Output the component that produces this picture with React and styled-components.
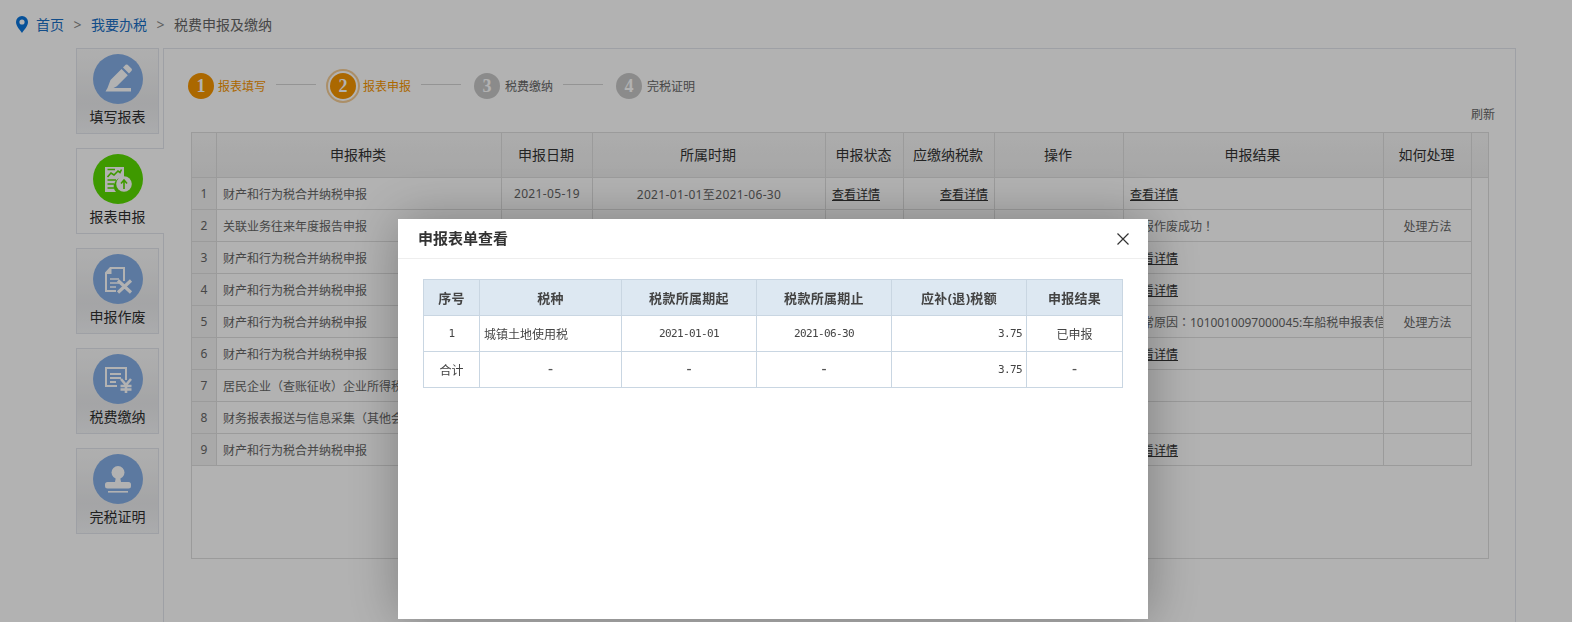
import React from "react";
import styled, { createGlobalStyle } from "styled-components";

const Global = createGlobalStyle`
  html, body { margin: 0; padding: 0; height: 100%; overflow: hidden; background: #fff; }
  body { font-family: "Noto Sans", "Noto Sans CJK SC", sans-serif; color: #333; }
  * { box-sizing: border-box; }
`;

const Page = styled.div`height: 622px; overflow: hidden;`;
const Crumbs = styled.nav`
  height: 48px; display: flex; align-items: center; padding: 0 0 0 16px; font-size: 14px; color: #666;
`;
const CrumbLink = styled.a`color: #1a6fc4; margin-left: ${p => p.$first ? "8px" : "0"};`;
const Sep = styled.span`margin: 0 9.5px; color: #888;`;
const Main = styled.div`display: flex; align-items: flex-start; padding-left: 76px;`;
const Sidebar = styled.div`width: 87px; display: flex; flex-direction: column; gap: 14px; padding-bottom: 20px;`;
const Tab = styled.div`
  height: 86px;
  width: ${p => p.$active ? "88px" : "83px"};
  margin-right: ${p => p.$active ? "-1px" : "0"};
  position: relative;
  z-index: ${p => p.$active ? 1 : 0};
  border: 1px solid #e2e6ec;
  border-right: ${p => p.$active ? "0" : "1px solid #e2e6ec"};
  background: ${p => p.$active ? "#fff" : "linear-gradient(#fbfbfb 0%, #ebecee 65%, #f5f6f8 100%)"};
  padding-top: 5px;
  display: flex; flex-direction: column;
`;
const Circle = styled.div`
  width: 50px; height: 50px; border-radius: 50%;
  margin-left: 16px;
  background: ${p => p.$green ? "#59dc00" : "#84aee6"};
`;
const TabLabel = styled.div`
  width: 81px; text-align: center; font-size: 14px; line-height: 20px; margin-top: 3px; color: #2e2e2e;
`;
const Panel = styled.section`
  width: 1353px; height: 700px; border: 1px solid #e2e6ec; padding-top: 24px;
`;
const Steps = styled.div`display: flex; align-items: center; height: 26px; padding-left: 24px;`;
const Num = styled.div`
  width: 26px; height: 26px; border-radius: 50%; flex: none;
  background: ${p => p.$on ? "#f59500" : "#c8c8c8"};
  color: #fff; font: bold 18px/26px "Liberation Serif", serif; text-align: center;
  box-shadow: ${p => p.$ring ? "0 0 0 2px #fff, 0 0 0 4px #f5cd96" : "none"};
  margin-left: ${p => p.$ml}px;
  margin-right: ${p => p.$mr}px;
`;
const StepText = styled.span`font-size: 12px; width: 48px; white-space: nowrap; color: ${p => p.$on ? "#f59500" : "#666"};`;
const StepLine = styled.i`display: block; width: 40px; height: 1px; background: #d4d4d4; margin: 0 0 4px 10px;`;
const Refresh = styled.div`text-align: right; font-size: 12px; line-height: 16px; margin-top: 8px; padding-right: 20px; color: #666;`;
const Grid = styled.div`
  width: 1298px; height: 427px; margin: 9px 0 0 27px; border: 1px solid #dfdfdf;
`;
const GridTable = styled.table`
  border-collapse: separate; border-spacing: 0; table-layout: fixed; width: ${p => p.$w}px;
`;
const Th = styled.th`
  height: 45px; padding: 0 2px 3px 0; font-size: 14px; font-weight: 400; color: #333; text-align: center;
  border-right: ${p => p.$last ? "0" : "1px solid #dfdfdf"}; border-bottom: 1px solid #dfdfdf;
  background: linear-gradient(#f7f7f7, #efefef);
`;
const Td = styled.td`
  height: 32px; padding: 0 6px; font-size: 12px; color: #666; white-space: nowrap; overflow: hidden;
  border-right: 1px solid #dfdfdf; border-bottom: 1px solid #dfdfdf;
  text-align: ${p => p.$align || "left"};
  background: ${p => p.$idx ? "#f2f2f2" : "transparent"};
  letter-spacing: ${p => p.$num ? "0.35px" : "0"};
`;
const Detail = styled.a`color: #333; text-decoration: underline;`;
const Punct = styled.span`font-family: "Noto Sans CJK TC", sans-serif;`;
const Digits = styled.span`letter-spacing: -.05px;`;

const Overlay = styled.div`position: fixed; inset: 0; background: rgba(0,0,0,.3); z-index: 5;`;
const Modal = styled.div`
  position: fixed; left: 398px; top: 219px; width: 750px; height: 400px; background: #fff; z-index: 6;
  box-shadow: 1px 1px 50px rgba(0,0,0,.3);
`;
const ModalHead = styled.header`
  height: 40px; border-bottom: 1px solid #eee; display: flex; align-items: center; justify-content: space-between;
  padding: 0 19px 0 20px;
`;
const ModalTitle = styled.h2`margin: 0 0 2px; font-size: 15px; font-weight: 700; color: #333;`;
const ModalBody = styled.div`padding: 20px 0 0 25px;`;
const FormTable = styled.table`
  border-collapse: separate; border-spacing: 0; table-layout: fixed; width: 700px;
  border-top: 1px solid #c9d6e2; border-left: 1px solid #c9d6e2;
`;
const FTh = styled.th`
  height: 36px; padding: 0; background: #dde8f2; color: #444; font-size: 13px; font-weight: 700; text-align: center;
  letter-spacing: .3px;
  border-right: 1px solid #c9d6e2; border-bottom: 1px solid #c9d6e2;
`;
const FTd = styled.td`
  height: 36px; padding: 0 4px; color: #444; text-align: ${p => p.$align || "center"};
  font: ${p => p.$mono ? `11px "DejaVu Sans Mono", monospace` : `12px "Noto Sans CJK SC", sans-serif`};
  letter-spacing: ${p => p.$mono ? "-.62px" : "0"};
  border-right: 1px solid #c9d6e2; border-bottom: 1px solid #c9d6e2;
`;
const Dash = styled.span`font: 15px/14px "DejaVu Sans Mono", monospace; letter-spacing: 0; color: #555; vertical-align: 1px;`;

const Svg = ({ children }) => <svg width="50" height="50" viewBox="0 0 50 50" fill="#fff">{children}</svg>;

const PencilIcon = () => (
  <Svg>
    <path d="M14.5 34 L17.5 26 L28.5 15 L34.8 21.3 L23.8 32.2 L20.5 34 L38 34 L38 37.5 L12.5 37.5 Z" />
    <path d="M30 13.5 L32.6 10.8 Q33.6 10 34.6 10.8 L38.6 14.8 Q39.4 15.8 38.6 16.8 L36 19.5 Z" />
  </Svg>
);
const ReportIcon = () => (
  <Svg>
    <path d="M12 13 H31 V24 A8.5 8.5 0 0 0 23 38 H12 Z" />
    <path d="M14.5 23 L18 19 L21 21 L25 17 L27 18.5 L28.5 15.5" fill="none" stroke="#59dc00" strokeWidth="1.6" />
    <path d="M14.5 15.5 H22 M14.5 26 H23 M14.5 30 H21 M14.5 34 H21" stroke="#59dc00" strokeWidth="1.4" />
    <circle cx="31" cy="30" r="7.8" />
    <path d="M31 35 V26.5 M28 29.5 L31 26 L34 29.5" fill="none" stroke="#59dc00" strokeWidth="1.6" />
  </Svg>
);
const VoidIcon = () => (
  <Svg>
    <path fillRule="evenodd" d="M17 13 H32 V27 L30 27 V15 H18.5 V20 H14 V36 H23 V38 H12 V18.5 Z" />
    <path d="M17 25 H26 M17 29 H26 M17 33 H23" stroke="#fff" strokeWidth="1.6" />
    <path d="M25 26.5 L38 38.5 M38 26.5 L25 38.5" stroke="#fff" strokeWidth="3.2" />
  </Svg>
);
const TaxIcon = () => (
  <Svg>
    <path fillRule="evenodd" d="M12 13 H34 V26 H32 V15 H14 V31 H24 V33 H12 Z" />
    <path d="M17 20 H28 M17 24 H28 M17 28 H23" stroke="#fff" strokeWidth="1.8" />
    <path d="M28 25 L33 31 L38 25 M27.5 32 H38.5 M27.5 35.5 H38.5 M33 30 V39" fill="none" stroke="#fff" strokeWidth="2.6" />
  </Svg>
);
const StampIcon = () => (
  <Svg>
    <circle cx="25" cy="18.5" r="6.5" />
    <path d="M23 23 H27 L28 28 H22 Z" />
    <rect x="12" y="28" width="26" height="6.5" rx="2.5" />
    <rect x="15" y="37" width="20" height="1.6" />
  </Svg>
);

const tabs = [
  ["填写报表", PencilIcon], ["报表申报", ReportIcon, true], ["申报作废", VoidIcon], ["税费缴纳", TaxIcon], ["完税证明", StampIcon],
];
const widths = [25, 285, 91, 233, 78, 91, 129, 260, 88];
const heads = ["", "申报种类", "申报日期", "所属时期", "申报状态", "应缴纳税款", "操作", "申报结果", "如何处理"];
const fhWidths = [56, 142, 135, 135, 135, 96];
const A = "财产和行为税合并纳税申报";
const link = <Detail>查看详情</Detail>;
const rows = [
  { name: A, date: "2021-05-19", period: "2021-01-01至2021-06-30", state: true, result: link },
  { name: "关联业务往来年度报告申报", result: <>申报作废成功<Punct>！</Punct></>, how: "处理方法" },
  { name: A, result: link },
  { name: A, result: link },
  { name: A, result: <>异常原因<Punct>：</Punct><Digits>1010010097000045:</Digits>车船税申报表信息</>, how: "处理方法" },
  { name: A, result: link },
  { name: <>居民企业<Punct>（</Punct>查账征收<Punct>）</Punct>企业所得税年度申报</> },
  { name: <>财务报表报送与信息采集<Punct>（</Punct>其他会计准则<Punct>）</Punct></> },
  { name: A, result: link },
];

export default function App() {
  return (
    <Page>
      <Global />
      <Crumbs>
        <svg width="12" height="17" viewBox="0 0 12 17"><path fill="#0a74dc" fillRule="evenodd" d="M6 0 A6 6 0 0 1 12 6 C12 10 8 14 6 17 C4 14 0 10 0 6 A6 6 0 0 1 6 0 Z M6 3.4 A2.6 2.6 0 1 0 6 8.6 A2.6 2.6 0 1 0 6 3.4 Z" /></svg>
        <CrumbLink $first>首页</CrumbLink><Sep>&gt;</Sep>
        <CrumbLink>我要办税</CrumbLink><Sep>&gt;</Sep>
        <span>税费申报及缴纳</span>
      </Crumbs>
      <Main>
        <Sidebar>
          {tabs.map(([label, Icon, active]) => (
            <Tab key={label} $active={active}>
              <Circle $green={active}><Icon /></Circle>
              <TabLabel>{label}</TabLabel>
            </Tab>
          ))}
        </Sidebar>
        <Panel>
          <Steps>
            <Num $on $mr={4}>1</Num><StepText $on>报表填写</StepText><StepLine />
            <Num $on $ring $ml={14} $mr={7}>2</Num><StepText $on>报表申报</StepText><StepLine />
            <Num $ml={13} $mr={5}>3</Num><StepText>税费缴纳</StepText><StepLine />
            <Num $ml={13} $mr={5}>4</Num><StepText>完税证明</StepText>
          </Steps>
          <Refresh>刷新</Refresh>
          <Grid>
            <GridTable $w={1296}>
              <colgroup>{widths.map((w, i) => <col key={i} width={w} />)}<col width={16} /></colgroup>
              <thead><tr>{heads.map((h, i) => <Th key={i}>{h}</Th>)}<Th $last /></tr></thead>
            </GridTable>
            <GridTable $w={1280}>
              <colgroup>{widths.map((w, i) => <col key={i} width={w} />)}</colgroup>
              <tbody>
                {rows.map((r, i) => (
                  <tr key={i}>
                    <Td $idx $align="center">{i + 1}</Td>
                    <Td>{r.name}</Td>
                    <Td $align="center" $num>{r.date}</Td>
                    <Td $align="center" $num>{r.period}</Td>
                    <Td>{r.state && link}</Td>
                    <Td $align="right">{r.state && link}</Td>
                    <Td />
                    <Td>{r.result}</Td>
                    <Td $align="center">{r.how}</Td>
                  </tr>
                ))}
              </tbody>
            </GridTable>
          </Grid>
        </Panel>
      </Main>
      <Overlay />
      <Modal>
        <ModalHead>
          <ModalTitle>申报表单查看</ModalTitle>
          <svg width="12" height="12" viewBox="0 0 12 12"><path d="M.5 .5 L11.5 11.5 M11.5 .5 L.5 11.5" stroke="#333" strokeWidth="1.2" /></svg>
        </ModalHead>
        <ModalBody>
          <FormTable>
            <colgroup>{fhWidths.map((w, i) => <col key={i} width={w} />)}</colgroup>
            <thead><tr>
              {["序号", "税种", "税款所属期起", "税款所属期止", "应补(退)税额", "申报结果"].map(h => <FTh key={h}>{h}</FTh>)}
            </tr></thead>
            <tbody>
              <tr>
                <FTd $mono>1</FTd><FTd $align="left">城镇土地使用税</FTd><FTd $mono>2021-01-01</FTd><FTd $mono>2021-06-30</FTd><FTd $mono $align="right">3.75</FTd><FTd>已申报</FTd>
              </tr>
              <tr>
                <FTd>合计</FTd><FTd><Dash>-</Dash></FTd><FTd><Dash>-</Dash></FTd><FTd><Dash>-</Dash></FTd><FTd $mono $align="right">3.75</FTd><FTd><Dash>-</Dash></FTd>
              </tr>
            </tbody>
          </FormTable>
        </ModalBody>
      </Modal>
    </Page>
  );
}
